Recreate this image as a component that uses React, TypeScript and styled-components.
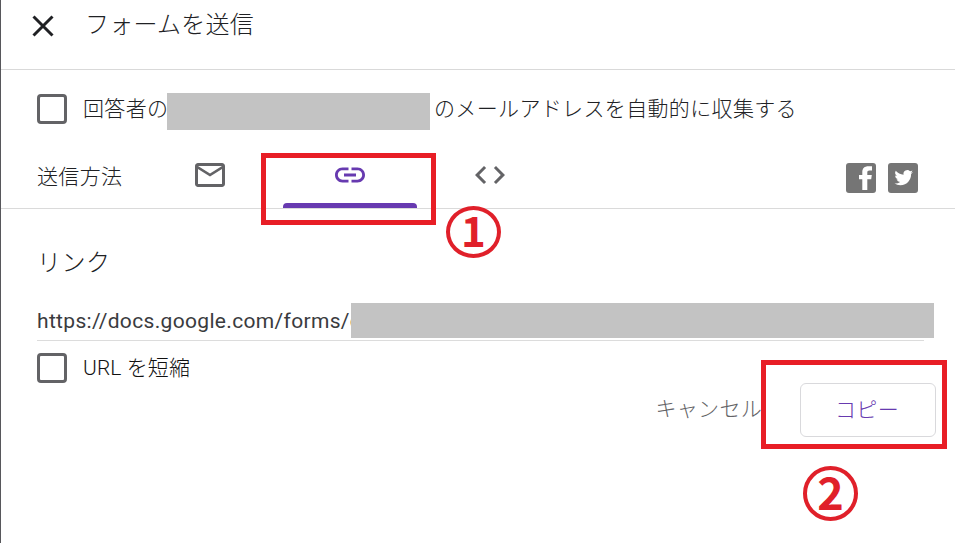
import React from "react";
import styled, { createGlobalStyle } from "styled-components";

const GlobalStyle = createGlobalStyle`
  body { margin: 0; background: #fff; }
  * { box-sizing: border-box; }
`;

const Dialog = styled.main`
  position: relative;
  width: 955px;
  height: 543px;
  overflow: hidden;
  border-left: 1px solid #57575b;
  background: #fff;
  color: #202124;
  font-family: Roboto, "Noto Sans CJK JP", sans-serif;
  font-size: 21px;
  font-weight: 300;
`;

const Header = styled.header`
  display: flex;
  align-items: center;
  height: 70px;
  padding: 0 0 18px 30px;
  border-bottom: 1px solid #d9d9d9;
`;

const CloseButton = styled.button`
  display: flex;
  width: 24px;
  height: 24px;
  padding: 0;
  border: 0;
  background: none;
`;

const Title = styled.h1`
  margin: 0 0 1px 30px;
  font-size: 24px;
  font-weight: 300;
  letter-spacing: 0.25px;
  line-height: 34px;
  white-space: nowrap;
`;

const CollectRow = styled.div`
  display: flex;
  align-items: center;
  height: 77px;
  padding-left: 36px;
`;

const Checkbox = styled.span`
  flex: none;
  width: 30px;
  height: 30px;
  border: 3px solid #636366;
  border-radius: 4px;
`;

const Label = styled.span<{ $left?: number; $width?: number; $spacing?: number; $up?: number }>`
  flex: none;
  width: ${(p) => (p.$width ? `${p.$width}px` : "auto")};
  margin-left: ${(p) => p.$left ?? 0}px;
  padding-bottom: ${(p) => p.$up ?? 0}px;
  letter-spacing: ${(p) => p.$spacing ?? 0.35}px;
  line-height: 30px;
  white-space: nowrap;
`;

const Redaction = styled.span<{ $width: number; $height: number; $down?: number }>`
  flex: none;
  width: ${(p) => p.$width}px;
  height: ${(p) => p.$height}px;
  margin-top: ${(p) => p.$down ?? 0}px;
  background: #c3c3c3;
`;

const MethodBar = styled.nav`
  display: flex;
  height: 62px;
  padding-left: 36px;
  border-bottom: 1px solid #dadada;
`;

const MethodLabel = styled.div`
  width: 103px;
  padding-top: 15px;
  line-height: 30px;
  letter-spacing: 0.35px;
`;

const Tab = styled.button<{ $active?: boolean }>`
  position: relative;
  display: flex;
  justify-content: center;
  width: 140px;
  height: 61px;
  padding: 10px 0 0;
  border: 0;
  background: none;
  color: ${(p) => (p.$active ? "#673ab0" : "#636366")};
  &::after {
    content: "";
    display: ${(p) => (p.$active ? "block" : "none")};
    position: absolute;
    left: 3px;
    bottom: 0;
    width: 134px;
    height: 5px;
    border-radius: 4px 4px 0 0;
    background: #673ab0;
  }
`;

const Social = styled.div`
  display: flex;
  gap: 12px;
  margin: 16px 37px 0 auto;
`;

const LinkPanel = styled.section`
  padding: 37px 21px 0 36px;
`;

const PanelTitle = styled.h2`
  margin: 0;
  font-size: 24px;
  font-weight: 300;
  line-height: 34px;
  letter-spacing: 0.5px;
`;

const UrlField = styled.div`
  display: flex;
  height: 38px;
  margin-top: 23px;
  margin-right: 10px;
  border-bottom: 1px solid #dcdcdc;
`;

const UrlText = styled.span`
  flex: none;
  width: 314px;
  font-weight: 400;
  color: #3a3b3e;
  letter-spacing: 0.33px;
  line-height: 36px;
  white-space: nowrap;
`;

const ShortenRow = styled.div`
  display: flex;
  align-items: center;
  height: 30px;
  margin-top: 12px;
  color: #111;
`;

const Actions = styled.footer`
  display: flex;
  justify-content: flex-end;
  align-items: center;
  gap: 38px;
  height: 54px;
  padding-right: 19px;
`;

const Cancel = styled.button`
  padding: 0 0 6px;
  border: 0;
  background: none;
  font: inherit;
  color: #636366;
  letter-spacing: 0.3px;
`;

const Copy = styled.button`
  width: 136px;
  height: 54px;
  padding: 0 2px 5px 0;
  border: 1px solid #d9d9dc;
  border-radius: 6px;
  background: #fff;
  font: inherit;
  color: #673ab0;
  letter-spacing: 0.3px;
`;

const Highlight = styled.div<{ $x: number; $y: number; $w: number; $h: number }>`
  position: absolute;
  left: ${(p) => p.$x - 1}px;
  top: ${(p) => p.$y}px;
  width: ${(p) => p.$w}px;
  height: ${(p) => p.$h}px;
  border: 5px solid #e81e26;
  pointer-events: none;
`;

const Step = styled.div<{ $x: number; $y: number; $h: number; $size: number }>`
  position: absolute;
  left: ${(p) => p.$x - 1}px;
  top: ${(p) => p.$y}px;
  display: flex;
  align-items: center;
  justify-content: center;
  width: 55px;
  height: ${(p) => p.$h}px;
  padding-bottom: 7px;
  border: 4px solid #e0202a;
  border-radius: 50%;
  color: #e0202a;
  font-family: "Noto Sans CJK JP", sans-serif;
  font-size: ${(p) => p.$size}px;
  font-weight: 700;
  line-height: 1;
`;

const MailIcon = () => (
  <svg width="36" height="36" viewBox="0 0 24 24" fill="currentColor">
    <path d="M22 6c0-1.100-.9-2-2-2H4c-1.100 0-2 .9-2 2v12c0 1.100.9 2 2 2h16c1.100 0 2-.9 2-2V6zm-2 0-8 5-8-5h16zm0 12H4V8l8 5 8-5v10z" />
  </svg>
);

const LinkIcon = () => (
  <svg width="36" height="36" viewBox="0 0 24 24" fill="currentColor">
    <path d="M3.900 12c0-1.710 1.390-3.100 3.100-3.100h4V7H7c-2.760 0-5 2.240-5 5s2.240 5 5 5h4v-1.900H7c-1.710 0-3.100-1.390-3.100-3.100zM8 13h8v-2H8v2zm9-6h-4v1.900h4c1.710 0 3.100 1.390 3.100 3.100s-1.390 3.100-3.100 3.100h-4V17h4c2.760 0 5-2.240 5-5s-2.240-5-5-5z" />
  </svg>
);

const CodeIcon = () => (
  <svg width="36" height="36" viewBox="0 0 24 24" fill="currentColor">
    <path d="M9.400 16.600 4.800 12l4.600-4.600L8 6l-6 6 6 6 1.400-1.400zm5.200 0 4.600-4.600-4.600-4.600L16 6l6 6-6 6-1.400-1.400z" />
  </svg>
);

const FacebookIcon = () => (
  <svg width="30" height="30" viewBox="0 0 30 30">
    <rect width="30" height="30" rx="3" fill="#757575" />
    <path d="M16.300 27V16.300H13v-4.400h3.300V9.200c0-4 2.200-6 6.200-6H26v4.300h-2.500c-1.700 0-2.200.7-2.200 2.100v2.300h4.500l-.6 4.400h-3.900V27z" fill="#fff" />
  </svg>
);

const TwitterIcon = () => (
  <svg width="30" height="30" viewBox="0 0 30 30">
    <rect width="30" height="30" rx="3" fill="#757575" />
    <path
      transform="translate(6.500 5.400) scale(.77)"
      d="M23.950 4.570a10 10 0 0 1-2.820.770 4.960 4.960 0 0 0 2.160-2.720c-.950.560-2 .960-3.130 1.190a4.920 4.920 0 0 0-8.380 4.480C7.690 8.090 4.070 6.130 1.640 3.160a4.920 4.920 0 0 0 1.520 6.570 4.900 4.900 0 0 1-2.230-.61v.06a4.920 4.920 0 0 0 3.950 4.830 4.900 4.900 0 0 1-2.210.08 4.940 4.940 0 0 0 4.600 3.420A9.870 9.870 0 0 1 0 19.540a14 14 0 0 0 7.550 2.210c9.050 0 14-7.500 14-13.980 0-.21 0-.42-.02-.63a9.940 9.940 0 0 0 2.460-2.550z"
      fill="#fff"
    />
  </svg>
);

export default function App() {
  return (
    <>
      <GlobalStyle />
      <Dialog>
        <Header>
          <CloseButton aria-label="閉じる">
            <svg width="24" height="24" viewBox="0 0 24 24" stroke="#202124" strokeWidth="3">
              <path d="M2.500 2.500l19 19M21.500 2.500l-19 19" />
            </svg>
          </CloseButton>
          <Title>フォームを送信</Title>
        </Header>
        <CollectRow>
          <Checkbox />
          <Label $left={16} $width={84}>回答者の</Label>
          <Redaction $width={263} $height={37} $down={5} />
          <Label $left={4}>のメールアドレスを自動的に収集する</Label>
        </CollectRow>
        <MethodBar>
          <MethodLabel>送信方法</MethodLabel>
          <Tab aria-label="メール"><MailIcon /></Tab>
          <Tab $active aria-label="リンク"><LinkIcon /></Tab>
          <Tab aria-label="埋め込み"><CodeIcon /></Tab>
          <Social>
            <FacebookIcon />
            <TwitterIcon />
          </Social>
        </MethodBar>
        <LinkPanel>
          <PanelTitle>リンク</PanelTitle>
          <UrlField>
            <UrlText>https://docs.google.com/forms/d</UrlText>
            <Redaction $width={583} $height={35} />
          </UrlField>
          <ShortenRow>
            <Checkbox />
            <Label $left={16} $up={1} $spacing={0.1}>URL を短縮</Label>
          </ShortenRow>
        </LinkPanel>
        <Actions>
          <Cancel>キャンセル</Cancel>
          <Copy>コピー</Copy>
        </Actions>
        <Highlight $x={261} $y={153} $w={175} $h={72} />
        <Highlight $x={761} $y={360} $w={186} $h={89} />
        <Step $x={446} $y={206} $h={52} $size={42}>1</Step>
        <Step $x={803} $y={466} $h={55} $size={45}>2</Step>
      </Dialog>
    </>
  );
}
